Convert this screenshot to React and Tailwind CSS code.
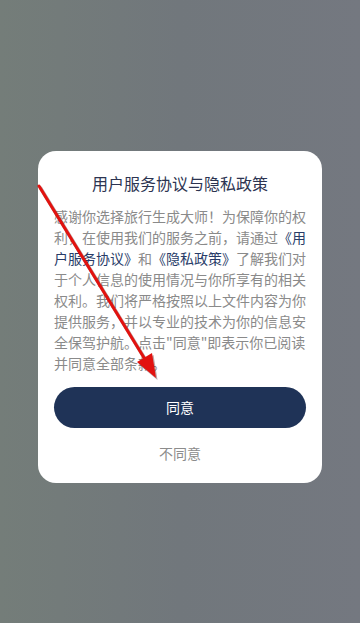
import React from 'react';

const FONT = { fontFamily: '"Noto Sans CJK SC", "Noto Sans", sans-serif' };

function Arrow() {
  // red annotation arrow drawn over the dialog
  return (
    <svg className="absolute inset-0 pointer-events-none" width="360" height="623" viewBox="0 0 360 623">
      <g opacity="0.35" transform="translate(1.5,2)">
        <line x1="39" y1="186" x2="146" y2="361" stroke="#400" strokeWidth="3.5" strokeLinecap="round" />
        <polygon points="156,378 152,353 137,362" fill="#400" />
      </g>
      <line x1="39" y1="186" x2="146" y2="361" stroke="#e2120f" strokeWidth="3" strokeLinecap="round" />
      <polygon points="156,378 152,353 137,362" fill="#e2120f" />
    </svg>
  );
}

export default function App() {
  return (
    <div
      className="relative w-[360px] h-[623px] overflow-hidden bg-linear-to-r from-[#747d79] via-[#71777c] to-[#747880] pt-[151px]"
      style={FONT}
    >
      <div className="mx-[38px] w-[284px] bg-white rounded-[18px] pt-[20px] pb-[18px] px-[16px]">
        <h2 className="text-center text-[16px] leading-[24px] text-[#2c3451]">用户服务协议与隐私政策</h2>
        <p className="mt-[11px] mx-auto w-[252px] text-[14px] leading-[21px] text-[#8a8a8a]">
          感谢你选择旅行生成大师！为保障你的权利，在使用我们的服务之前，请通过
          <span className="text-[#283b68]">《用户服务协议》</span>和
          <span className="text-[#283b68]">《隐私政策》</span>
          了解我们对于个人信息的使用情况与你所享有的相关权利。我们将严格按照以上文件内容为你提供服务，并以专业的技术为你的信息安全保驾护航。点击"同意"即表示你已阅读并同意全部条款。
        </p>
        <button className="mt-[13px] mx-auto block w-[252px] h-[41px] rounded-full bg-[#1f3357] text-white text-[14px]">
          同意
        </button>
        <div className="mt-[13px] text-center text-[14px] leading-[24px] text-[#8c8c8c]">不同意</div>
      </div>
      <Arrow />
    </div>
  );
}
